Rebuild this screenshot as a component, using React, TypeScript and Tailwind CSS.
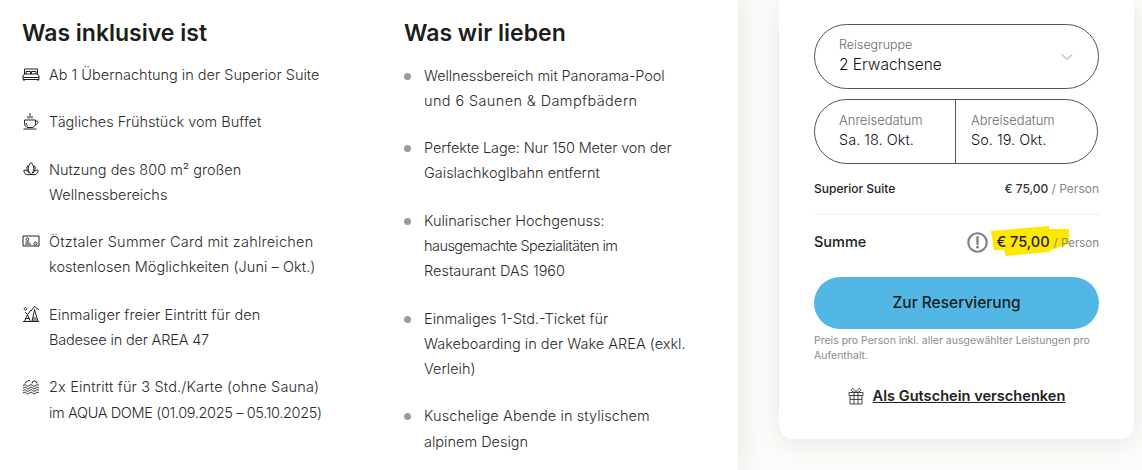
import React from "react";

const Ic = ({ children }: { children: React.ReactNode }) => (
  <svg width="18" height="18" viewBox="0 0 18 18" fill="none" stroke="#222" strokeWidth="1" className="shrink-0 mt-[3px]">
    {children}
  </svg>
);

const Bed = () => (
  <Ic>
    <path d="M2.500 9V4h13v5M1 11 2.500 9h13L17 11v3.500H1zM1 12.500h16M2 14.500v1.500M16 14.500v1.500M4 9V6.500h4.500V9M9.500 9V6.500H14V9" />
  </Ic>
);
const Cup = () => (
  <Ic>
    <path d="M2.500 8h11v3.500c0 2.500-2 4-3.500 4H6c-1.500 0-3.500-1.500-3.500-4zM13.500 9h1.500c1.500 0 1.800 2.800-1.800 3.800M1.500 17h13M8 1v5.500M6 4v2.500M10 4v2.500M4 11c0 1.500 1 2.500 2 3" />
  </Ic>
);
const Lotus = () => (
  <Ic>
    <path d="M9 2.500c2 2 2.800 4 2.800 6S10.500 13.500 9 14.500C7.500 13.500 6.200 10.500 6.200 8.500S7 4.500 9 2.500zM5 6.500C5.500 6 6 6 6.800 6.200M13 6.500c-.5-.5-1-.5-1.800-.3M5 6.500c-.6 2 .2 4.500 2 6.500M13 6.500c.6 2-.2 4.500-2 6.500M2 10c1 0 2 .3 3 1M16 10c-1 0-2 .3-3 1M2 10c-.5 2 1 4.500 4 4.800L9 14.500l3 .3c3-.3 4.500-2.800 4-4.800" />
  </Ic>
);
const CardIc = () => (
  <Ic>
    <path d="M1 4h16v10H1zM3 12h6M3.500 10h4M5.500 6a1.300 1.300 0 1 0 .01 0zM12 11.500a1.500 1.500 0 1 0 3 0 1.500 1.500 0 1 0-3 0z" />
  </Ic>
);
const Area = () => (
  <Ic>
    <path d="M1 16.500h16M2.500 16.500l3-7 3 7M3.500 13.500h4M3.500 2.500a1.300 1.300 0 1 0 .01 0zM10 16.500l2.500-12 3.500 12M9 6l3.500-4.500L17 5M11 13h3.500M10.500 15h4.500M6 9l3-4M3 7l2.500 2.500" />
  </Ic>
);
const Waves = () => (
  <Ic>
    <path d="M1 8.500c1.300-1 2.500-1 3.200 0s2 1 3.200 0 2.500-1 3.200 0 2 1 3.200 0 2.500-1 3.200 0M1 11c1.300-1 2.500-1 3.200 0s2 1 3.200 0 2.500-1 3.200 0 2 1 3.200 0 2.500-1 3.200 0M1 13.500c1.300-1 2.500-1 3.200 0s2 1 3.200 0 2.500-1 3.200 0 2 1 3.200 0 2.500-1 3.200 0M1 16c1.300-1 2.500-1 3.200 0s2 1 3.200 0 2.500-1 3.200 0 2 1 3.200 0 2.500-1 3.200 0M3 6.500c.8-2 3-3 5-3M10 6.500a2.500 2.500 0 0 1 5 0" />
  </Ic>
);

type Line = [string, string?];

const included: [React.ReactNode, Line[]][] = [
  [<Bed />, [["Ab 1 Übernachtung in der Superior Suite"]]],
  [<Cup />, [["Tägliches Frühstück vom Buffet"]]],
  [<Lotus />, [["Nutzung des 800 m² großen"], ["Wellnessbereichs"]]],
  [<CardIc />, [["Ötztaler Summer Card mit zahlreichen", "tracking-[0.23px]"], ["kostenlosen Möglichkeiten (Juni – Okt.)", "tracking-[0.05px]"]]],
  [<Area />, [["Einmaliger freier Eintritt für den", "tracking-[0.09px]"], ["Badesee in der AREA 47", "tracking-[-0.18px]"]]],
  [<Waves />, [["2x Eintritt für 3 Std./Karte (ohne Sauna)", "tracking-[0.17px]"], ["im AQUA DOME (01.09.2025 – 05.10.2025)", "tracking-[-0.36px]"]]],
];

const loved: Line[][] = [
  [["Wellnessbereich mit Panorama-Pool", "tracking-[-0.09px]"], ["und 6 Saunen & Dampfbädern", "tracking-[0.38px]"]],
  [["Perfekte Lage: Nur 150 Meter von der", "tracking-[-0.14px]"], ["Gaislachkoglbahn entfernt"]],
  [["Kulinarischer Hochgenuss:"], ["hausgemachte Spezialitäten im", "tracking-[-0.55px]"], ["Restaurant DAS 1960"]],
  [["Einmaliges 1-Std.-Ticket für"], ["Wakeboarding in der Wake AREA (exkl."], ["Verleih)"]],
  [["Kuschelige Abende in stylischem", "tracking-[0.1px]"], ["alpinem Design"]],
];

const Lines = ({ lines }: { lines: Line[] }) => (
  <div className="text-[14.5px] leading-[25.3px] font-light text-[#2b2b2b] whitespace-nowrap">
    {lines.map(([text, cls]) => (
      <div key={text} className={cls}>
        {text}
      </div>
    ))}
  </div>
);

export default function App() {
  return (
    <div className="flex w-[1142px] h-[470px] overflow-hidden bg-[#fdfcfa] [font-family:Inter,sans-serif] text-[#1d1d1b]">
      <div className="relative z-10 w-[738px] shrink-0 bg-white shadow-[0_0_28px_rgba(90,80,70,0.16)] flex pl-[22px] pt-[18px]">
        <div className="w-[382px] shrink-0">
          <h2 className="text-[23px] leading-[30px] font-semibold text-[#1d1d1b] mb-[14px]">Was inklusive ist</h2>
          <div className="flex flex-col gap-[22px]">
            {included.map(([icon, lines]) => (
              <div key={lines[0][0]} className="flex gap-[9px]">
                {icon}
                <Lines lines={lines} />
              </div>
            ))}
          </div>
        </div>
        <div>
          <h2 className="text-[23px] leading-[30px] font-semibold text-[#1d1d1b] mb-[14px]">Was wir lieben</h2>
          <div className="flex flex-col gap-[22px] pt-[0.5px]">
            {loved.map((lines) => (
              <div key={lines[0][0]} className="flex gap-[13px]">
                <span className="w-[7px] h-[7px] rounded-full bg-[#9a9a9a] shrink-0 mt-[10px]" />
                <Lines lines={lines} />
              </div>
            ))}
          </div>
        </div>
      </div>

      <div className="flex-1 pl-[41px] pr-[8px]">
        <div className="bg-white rounded-b-[14px] shadow-[0_4px_26px_rgba(90,80,70,0.12)] h-[439px] px-[35px] pt-[24px]">
          <div className="flex items-center justify-between h-[65px] rounded-full border border-[#555] pl-[24px] pr-[25px]">
            <div className="pt-[1px]">
              <div className="text-[12.5px] leading-[16px] font-light text-[#6b6b6b]">Reisegruppe</div>
              <div className="text-[15.5px] leading-[24px] font-light text-[#111]">2 Erwachsene</div>
            </div>
            <svg width="12" height="8" viewBox="0 0 12 8" fill="none" stroke="#6f9fa8" strokeWidth="1">
              <path d="M1 1.500 6 6.500l5-5" />
            </svg>
          </div>

          <div className="flex h-[65px] w-[284px] mt-[10px] rounded-full border border-[#555]">
            <div className="w-[141px] border-r border-[#555] pl-[24px] pt-[12px]">
              <div className="text-[13px] leading-[16px] font-light text-[#6b6b6b]">Anreisedatum</div>
              <div className="text-[14.5px] leading-[24px] font-light text-[#111]">Sa. 18. Okt.</div>
            </div>
            <div className="pl-[15px] pt-[12px]">
              <div className="text-[13px] leading-[16px] font-light text-[#6b6b6b]">Abreisedatum</div>
              <div className="text-[14.5px] leading-[24px] font-light text-[#111]">So. 19. Okt.</div>
            </div>
          </div>

          <div className="flex items-center justify-between mt-[16px] pb-[16px] border-b border-[#efefef] h-[35px]">
            <span className="text-[12px] leading-[18px] font-medium text-[#222]">Superior Suite</span>
            <span className="text-[12px] leading-[18px] font-medium text-[#333]">
              € 75,00 <span className="text-[#888] font-normal">/ Person</span>
            </span>
          </div>

          <div className="flex items-center justify-between h-[52px] pt-[2px]">
            <span className="text-[14.5px] font-medium text-[#222]">Summe</span>
            <div className="flex items-center">
              <svg width="21" height="21" viewBox="0 0 20 20" fill="none" className="mr-[8px]">
                <circle cx="10" cy="10" r="8.8" stroke="#7f7f7f" strokeWidth="2" />
                <path d="M10 5v6.500" stroke="#7f7f7f" strokeWidth="2.2" strokeLinecap="round" />
                <circle cx="10" cy="14.5" r="1.3" fill="#7f7f7f" />
              </svg>
              <div className="relative flex items-baseline">
                <svg width="78" height="30" viewBox="0 0 78 30" className="absolute left-[-5px] top-[-6px]" aria-hidden="true">
                  <path d="M0 5 58 0v3l20 0v15l-18 6-2 2-43 4-2-6-10 0z" fill="#ffe800" />
                </svg>
                <span className="relative text-[14.5px] leading-[20px] font-medium text-[#222]">€ 75,00</span>
                <span className="relative text-[11.5px] leading-[20px] text-[#888] ml-[4px]">/ Person</span>
              </div>
            </div>
          </div>

          <button className="block w-full h-[52px] mt-[10px] rounded-full bg-[#52b7e4] text-[15.5px] font-medium text-[#1d1d1b]">
            Zur Reservierung
          </button>

          <p className="mt-[4px] text-[10.5px] leading-[15px] font-normal text-[#8c8c8c] whitespace-nowrap">
            Preis pro Person inkl. aller ausgewählter Leistungen pro
            <br />
            Aufenthalt.
          </p>

          <div className="flex items-center justify-center gap-[9px] mt-[23px]">
            <svg width="16" height="18" viewBox="0 0 16 18" fill="none" stroke="#333" strokeWidth="0.9">
              <path d="M1 5.500h14v3H1zM2 8.500h12v8.500H2zM6 5.500V17M10 5.500V17M2 12.500h12M8 5.500C6 5.500 3.500 4.500 3.500 2.800S6 .5 8 5.500zM8 5.500c2 0 4.500-1 4.500-2.700S10 .5 8 5.500z" />
            </svg>
            <a className="text-[14.6px] leading-[20px] font-semibold text-[#222] underline">Als Gutschein verschenken</a>
          </div>
        </div>
      </div>
    </div>
  );
}
